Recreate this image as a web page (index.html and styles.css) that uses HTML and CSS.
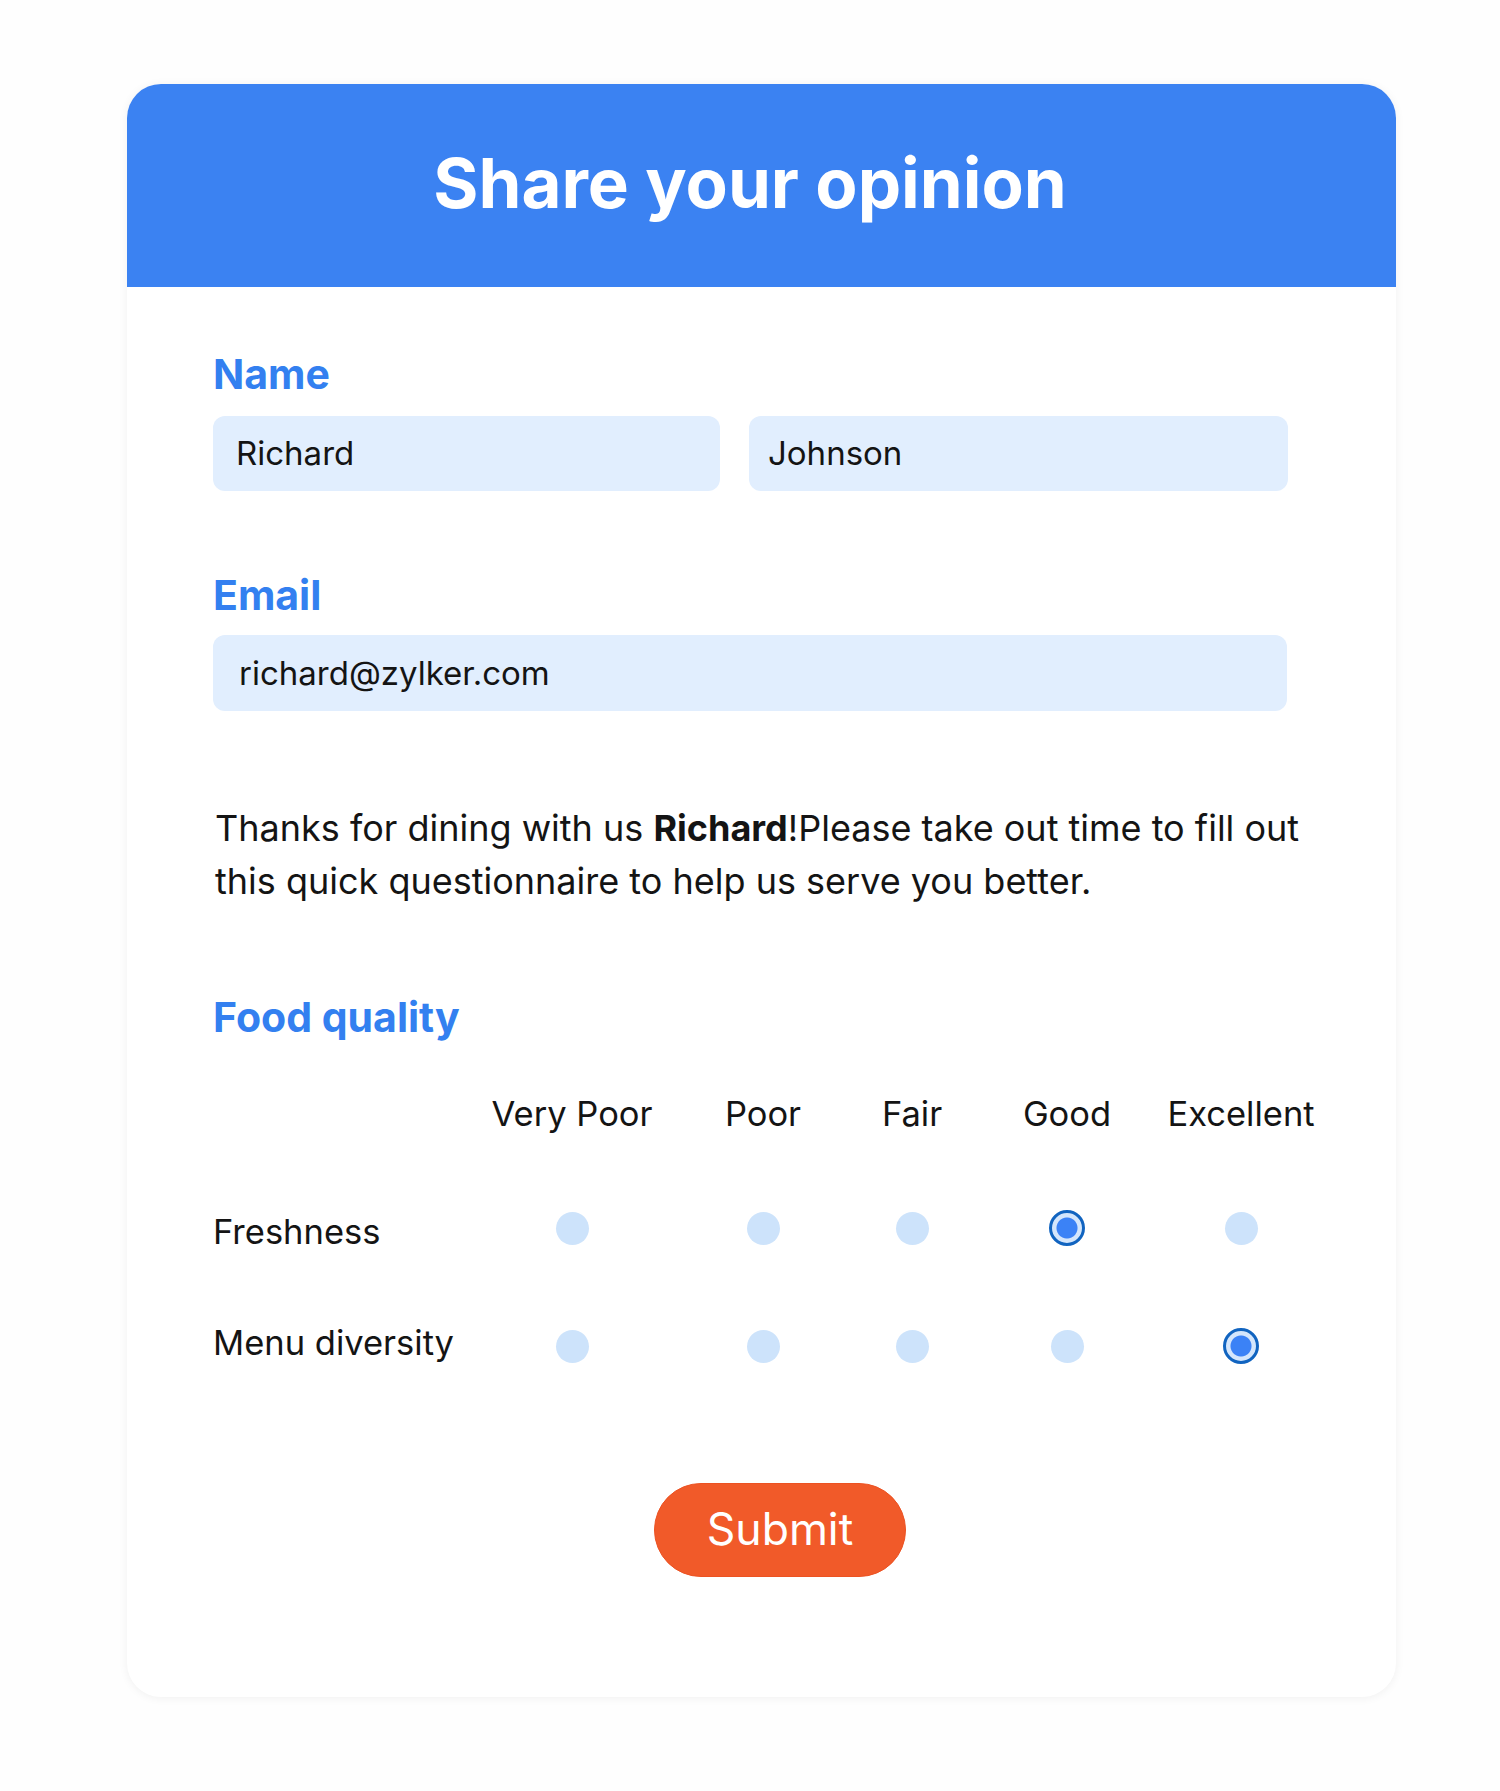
FILE: index.html
```html
<!DOCTYPE html>
<html lang="en">
<head>
<meta charset="utf-8">
<title>Share your opinion</title>
<link rel="stylesheet" href="styles.css">
</head>
<body>
<main class="card">
  <header class="card-head">
    <h1 class="title">Share your opinion</h1>
  </header>
  <section class="card-body">
    <div class="field">
      <h2 class="label">Name</h2>
      <div class="row-inputs">
        <div class="input input-first">Richard</div>
        <div class="input input-last">Johnson</div>
      </div>
    </div>
    <div class="field field-email">
      <h2 class="label">Email</h2>
      <div class="input input-email">richard@zylker.com</div>
    </div>
    <p class="intro"><span>Thanks for dining with us </span><strong>Richard</strong><span>!Please take out time to fill out</span> <span>this quick questionnaire to help us serve you better.</span></p>
    <h2 class="label label-food">Food quality</h2>
    <div class="matrix">
      <div class="cell head"></div>
      <div class="cell head">Very Poor</div>
      <div class="cell head">Poor</div>
      <div class="cell head">Fair</div>
      <div class="cell head">Good</div>
      <div class="cell head">Excellent</div>

      <div class="cell rowlabel rowlabel-low">Freshness</div>
      <div class="cell"><span class="radio"></span></div>
      <div class="cell"><span class="radio"></span></div>
      <div class="cell"><span class="radio"></span></div>
      <div class="cell"><span class="radio on"></span></div>
      <div class="cell"><span class="radio"></span></div>

      <div class="cell rowlabel rowlabel-high">Menu diversity</div>
      <div class="cell"><span class="radio"></span></div>
      <div class="cell"><span class="radio"></span></div>
      <div class="cell"><span class="radio"></span></div>
      <div class="cell"><span class="radio"></span></div>
      <div class="cell"><span class="radio on"></span></div>
    </div>
    <div class="actions">
      <button class="submit" type="button">Submit</button>
    </div>
  </section>
</main>
</body>
</html>
```

FILE: styles.css
```css
* { box-sizing: border-box; }
html, body { margin: 0; padding: 0; }
body {
  background: #fefefe;
  font-family: Inter, "Noto Sans", sans-serif;
  color: #141414;
  width: 1500px;
  min-height: 1791px;
  padding-top: 84px;
}
.card {
  margin-left: 127px;
  width: 1269px;
  height: 1613px;
  background: #ffffff;
  border-radius: 34px;
  box-shadow: 0 1px 10px rgba(0, 0, 0, 0.06);
  overflow: hidden;
}
.card-head {
  background: #3b82f2;
  height: 203px;
  padding: 65px 23px 0 0;
}
.title {
  margin: 0;
  font-size: 69px;
  line-height: 69px;
  font-weight: 700;
  color: #ffffff;
  text-align: center;
}
.card-body {
  padding: 67px 86px 0 86px;
}
.label {
  margin: 0;
  font-size: 41px;
  line-height: 41px;
  font-weight: 700;
  color: #3380f0;
}
.row-inputs {
  display: flex;
  gap: 29px;
  margin-top: 21px;
}
.input {
  height: 75px;
  background: #e1eefe;
  border-radius: 12px;
  font-size: 33px;
  line-height: 75px;
  padding-left: 23px;
  color: #141414;
}
.input-first { width: 507px; }
.input-last { width: 539px; padding-left: 19px; }
.field-email { margin-top: 84px; }
.input-email {
  width: 1074px;
  height: 76px;
  line-height: 76px;
  margin-top: 19px;
  padding-left: 26px;
}
.intro {
  margin: 91px 0 0 2px;
  width: 1100px;
  font-size: 36px;
  line-height: 53px;
}
.intro strong { font-weight: 700; }
.label-food { margin-top: 89px; }
.matrix {
  display: grid;
  grid-template-columns: 264px 190px 192px 106px 204px 144px;
  grid-template-rows: 85px 118px 118px;
  margin-top: 46px;
  width: 1100px;
}
.cell {
  display: flex;
  align-items: center;
  justify-content: center;
  font-size: 34.5px;
  white-space: nowrap;
}
.cell.head {
  align-items: flex-start;
  line-height: 60px;
}
.cell.rowlabel { justify-content: flex-start; }
.rowlabel-low { padding-top: 7px; }
.rowlabel-high { padding-bottom: 7px; }
.radio {
  width: 33px;
  height: 33px;
  border-radius: 50%;
  background: #cde3fb;
}
.radio.on {
  width: 36px;
  height: 36px;
  border: 3px solid #1164c0;
  background: radial-gradient(circle, #3b82f6 0, #3b82f6 10px, #d4e6fc 11px);
}
.actions {
  margin-top: 78px;
  padding-left: 441px;
}
.submit {
  display: flex;
  align-items: center;
  justify-content: center;
  width: 252px;
  height: 94px;
  border-radius: 47px;
  border: 1px solid #ec5222;
  background: #f15a29;
  color: #ffffff;
  font-family: Inter, "Noto Sans", sans-serif;
  font-size: 44.5px;
  padding: 0 0 2px 0;
  cursor: pointer;
}
```
